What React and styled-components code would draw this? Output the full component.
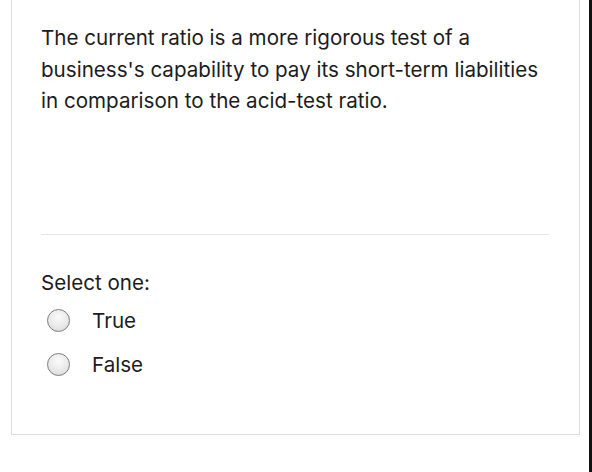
import React from 'react';
import styled, { createGlobalStyle } from 'styled-components';

const GlobalStyle = createGlobalStyle`
	html, body {
		margin: 0;
		padding: 0;
		background: #ffffff;
	}
	body {
		font-family: Inter, 'Liberation Sans', Arial, sans-serif;
		color: #1a1a1a;
	}
`;

export default function App() {
	const options = ['True', 'False'];

	return (
		<>
			<GlobalStyle />
			<Page>
				<Card>
					<Question>
						The current ratio is a more rigorous test of a
						<br />
						business's capability to pay its short-term liabilities
						<br />
						in comparison to the acid-test ratio.
					</Question>
					<Divider />
					<Prompt>Select one:</Prompt>
					<Options>
						{options.map((opt) => (
							<OptionRow key={opt}>
								<Radio />
								<OptionLabel>{opt}</OptionLabel>
							</OptionRow>
						))}
					</Options>
				</Card>
				<EdgeStrip />
			</Page>
		</>
	);
}

//styled components
const Page = styled.div`
	position: relative;
	width: 592px;
	height: 472px;
	overflow: hidden;
	background: #ffffff;
`;

const Card = styled.div`
	box-sizing: border-box;
	margin-left: 11px;
	width: 569px;
	height: 435px;
	padding: 22px 30px 0 29px;
	border: 1px solid #dddddd;
	border-top: none;
`;

const Question = styled.p`
	margin: 0;
	white-space: nowrap;
	font-size: 20.6px;
	line-height: 31.5px;
	color: #1c1c1c;
`;

const Divider = styled.div`
	margin-top: 117px;
	width: 508px;
	height: 1px;
	background: #e6e6e6;
`;

const Prompt = styled.div`
	margin-top: 36px;
	font-size: 20.6px;
	line-height: 24px;
	color: #1c1c1c;
`;

const Options = styled.div`
	margin-top: 14px;
	display: flex;
	flex-direction: column;
	gap: 21px;
`;

const OptionRow = styled.label`
	display: flex;
	align-items: center;
	height: 23px;
	padding-left: 6px;
`;

const Radio = styled.span`
	box-sizing: border-box;
	width: 23px;
	height: 23px;
	border-radius: 50%;
	border: 1.5px solid #7d7d7d;
	background: radial-gradient(circle at 50% 35%, #fbfbfb 0%, #e9e9e9 55%, #d2d2d2 100%);
	flex-shrink: 0;
`;

const OptionLabel = styled.span`
	margin-left: 22px;
	font-size: 20.6px;
	color: #1c1c1c;
`;

const EdgeStrip = styled.div`
	position: absolute;
	top: 0;
	right: 0;
	width: 3px;
	height: 100%;
	background: #111111;
`;
